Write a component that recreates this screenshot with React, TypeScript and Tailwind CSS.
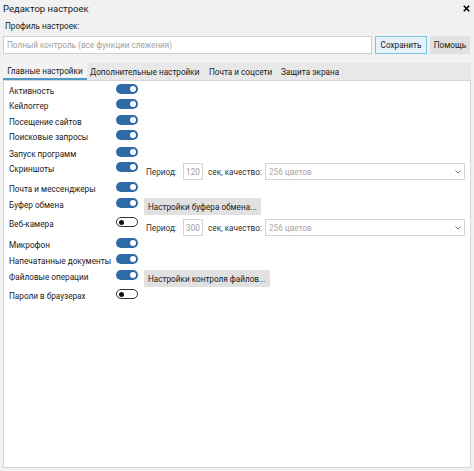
import React from "react";

type Row = {
  label: string;
  on: boolean;
  h: number;
  pt: string;
  right?: "period120" | "period300" | "clip" | "files";
};

const rows: Row[] = [
  { label: "Активность", on: true, h: 16, pt: "pt-[3px]" },
  { label: "Кейлоггер", on: true, h: 15, pt: "pt-[2px]" },
  { label: "Посещение сайтов", on: true, h: 16, pt: "pt-[3px]" },
  { label: "Поисковые запросы", on: true, h: 16, pt: "pt-[2px]" },
  { label: "Запуск программ", on: true, h: 16, pt: "pt-[3px]" },
  { label: "Скриншоты", on: true, h: 22, pt: "pt-[2px]", right: "period120" },
  { label: "Почта и мессенджеры", on: true, h: 14, pt: "pt-0" },
  { label: "Буфер обмена", on: true, h: 20, pt: "pt-[2px]", right: "clip" },
  { label: "Веб-камера", on: false, h: 22, pt: "pt-[1px]", right: "period300" },
  { label: "Микрофон", on: true, h: 16, pt: "pt-0" },
  { label: "Напечатанные документы", on: true, h: 16, pt: "pt-0" },
  { label: "Файловые операции", on: true, h: 19, pt: "pt-0", right: "files" },
  { label: "Пароли в браузерах", on: false, h: 16, pt: "pt-0" },
];

function Toggle({ on }: { on: boolean }) {
  return on ? (
    <div className="flex h-[10px] w-[22px] shrink-0 items-center justify-end rounded-full bg-[#2d6aa6] pr-[2px]">
      <div className="h-[6px] w-[6px] rounded-full bg-white" />
    </div>
  ) : (
    <div className="flex h-[10px] w-[22px] shrink-0 items-center justify-start rounded-full border border-[#333] bg-white pl-[2px]">
      <div className="h-[5px] w-[5px] rounded-full bg-[#111]" />
    </div>
  );
}

function Period({ value }: { value: string }) {
  return (
    <div className="flex h-[17px] items-center">
      <span className="ml-[2px] w-[37px] text-[#333]">Период:</span>
      <div className="flex h-[17px] w-[20px] items-center justify-center border border-[#d4d4d4] bg-white text-[#a0a0a0]">
        {value}
      </div>
      <span className="ml-[5px] w-[57px] text-[#333]">сек, качество:</span>
      <div className="flex h-[17px] w-[200px] items-center justify-between border border-[#d4d4d4] bg-white pl-[3px] pr-[3px] text-[#a8a8a8]">
        <span>256 цветов</span>
        <svg width="6" height="4" viewBox="0 0 6 4">
          <path d="M0.5 0.5 L3 3 L5.5 0.5" fill="none" stroke="#777" strokeWidth="1" />
        </svg>
      </div>
    </div>
  );
}

function GrayButton({ children }: { children: React.ReactNode }) {
  return (
    <div className="flex h-[17px] items-center bg-[#e1e1e1] px-[4px] text-[#1a1a1a]">
      {children}
    </div>
  );
}

export default function App() {
  return (
    <div
      className="flex h-[471px] w-[474px] flex-col whitespace-nowrap bg-[#f1f1f1] text-[8.2px] leading-[12px] text-[#1a1a1a]"
      style={{ fontFamily: 'Roboto, "Noto Sans", sans-serif' }}
    >
      {/* title */}
      <div className="flex h-[17px] items-center justify-between pl-[3px] pr-[4px]">
        <span className="text-[9.5px]">Редактор настроек</span>
        <svg width="7" height="7" viewBox="0 0 7 7">
          <path d="M0.8 0.8 L6.2 6.2 M6.2 0.8 L0.8 6.2" stroke="#000" strokeWidth="1.6" />
        </svg>
      </div>

      <div className="flex h-[18px] items-center pl-[5px]">Профиль настроек:</div>

      {/* profile */}
      <div className="mt-[1px] flex h-[18px] items-stretch pl-[3px]">
        <div className="flex w-[369px] items-center border border-[#d0d0d0] bg-white pl-[3px] text-[#a0a0a0]">
          Полный контроль (все функции слежения)
        </div>
        <div className="ml-[3px] flex w-[52px] items-center justify-center border border-[#7cc4df] bg-[#e5f1fb]">
          Сохранить
        </div>
        <div className="ml-[3px] flex w-[40px] items-center justify-center bg-[#e1e1e1]">
          Помощь
        </div>
      </div>

      {/* tabs */}
      <div className="mx-[3px] mt-[9px] flex h-[17px] items-stretch bg-[#e8e8e8]">
        <div className="flex w-[84px] items-center justify-center border-b-2 border-[#4f97c6] bg-[#f3f3f3]">
          Главные настройки
        </div>
        <div className="flex w-[119px] items-center pl-[3px]">Дополнительные настройки</div>
        <div className="flex w-[72px] items-center pl-[3px]">Почта и соцсети</div>
        <div className="flex items-center pl-[3px]">Защита экрана</div>
      </div>

      {/* panel */}
      <div className="mx-[3px] h-[388px] border border-[#d6d6d6] bg-white">
        {rows.map((r) => (
          <div
            key={r.label}
            className={`flex items-start ${r.pt}`}
            style={{ height: r.h }}
          >
            <span className="mt-[1px] w-[112px] shrink-0 pl-[5px]">{r.label}</span>
            <Toggle on={r.on} />
            <div className="ml-[6px]">
              {r.right === "period120" && (
                <div className="mt-[1px]">
                  <Period value="120" />
                </div>
              )}
              {r.right === "period300" && (
                <div className="mt-[2px]">
                  <Period value="300" />
                </div>
              )}
              {r.right === "clip" && <GrayButton>Настройки буфера обмена...</GrayButton>}
              {r.right === "files" && <GrayButton>Настройки контроля файлов...</GrayButton>}
            </div>
          </div>
        ))}
      </div>
    </div>
  );
}
